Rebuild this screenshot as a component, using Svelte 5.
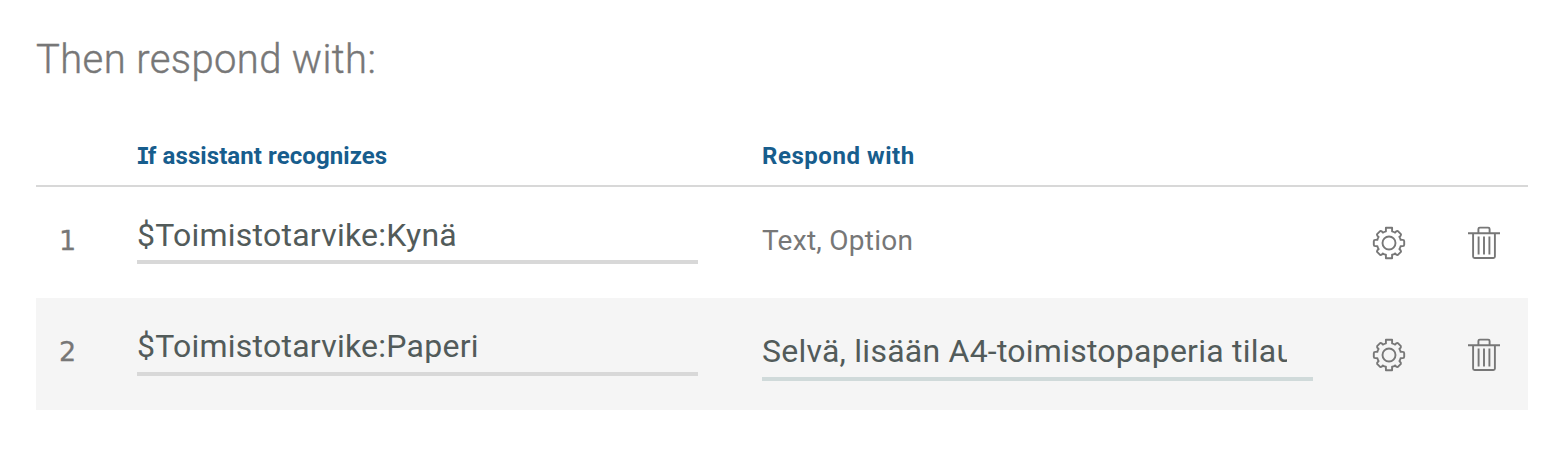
<script>
  const rows = [
    { id: 1, condition: '$Toimistotarvike:Kynä', response: 'Text, Option', editable: false },
    { id: 2, condition: '$Toimistotarvike:Paperi', response: 'Selvä, lisään A4-toimistopaperia tilau', editable: true }
  ];
</script>

{#snippet gear()}
  <svg width="34" height="34" viewBox="-17 -17 34 34" fill="none" stroke="#777" stroke-width="1.9" stroke-linejoin="round">
    <circle r="6.5" />
    <path d="M-3.1 -15.2H3.1V-11.6Q5.1 -11 6.1 -10.4Q7.5 -12.4 8.9 -11.9L11.9 -8.9Q12.4 -7.5 10.4 -6.1Q11.4 -4.8 11.6 -3.1H13.8Q15.2 -3.1 15.2 -1.7V1.7Q15.2 3.1 13.8 3.1H11.6Q11.4 4.8 10.4 6.1Q12.4 7.5 11.9 8.9L8.9 11.9Q7.5 12.4 6.1 10.4Q4.8 11.4 3.1 11.6V15.2H-3.1V11.6Q-4.8 11.4 -6.1 10.4Q-7.5 12.4 -8.9 11.9L-11.9 8.9Q-12.4 7.5 -10.4 6.1Q-11.4 4.8 -11.6 3.1H-13.8Q-15.2 3.1 -15.2 1.7V-1.7Q-15.2 -3.1 -13.8 -3.1H-11.6Q-11.4 -4.8 -10.4 -6.1Q-12.4 -7.5 -11.9 -8.9L-8.9 -11.9Q-7.5 -12.4 -6.1 -10.4Q-5.1 -11 -3.1 -11.6Z" />
  </svg>
{/snippet}

{#snippet trash()}
  <svg width="34" height="34" viewBox="0 0 34 34" fill="none" stroke="#777" stroke-width="1.9" stroke-linejoin="round">
    <path d="M1 7.2H33M11.4 7V3Q11.4 1.6 12.8 1.6H21.2Q22.6 1.6 22.6 3V7M6.1 7.2V30.5Q6.1 32 7.6 32H26.4Q27.9 32 27.9 30.5V7.2M11.6 10.5V28.5M17 10.5V28.5M22.4 10.5V28.5" />
  </svg>
{/snippet}

<main>
  <h1>Then respond with:</h1>
  <div class="grid head">
    <span></span>
    <span class="cond-title"><span class="cap">I</span>f assistant recognizes</span>
    <span class="resp-title">Respond with</span>
  </div>
  {#each rows as row}
    <div class="grid row" class:shaded={row.id % 2 === 0}>
      <span class="num">{row.id}</span>
      <div class="field" class:first={row.id === 1}><span>{row.condition}</span></div>
      {#if row.editable}
        <div class="field reply"><span>{row.response}</span></div>
      {:else}
        <div class="summary">{row.response}</div>
      {/if}
      <div class="icon">{@render gear()}</div>
      <div class="icon">{@render trash()}</div>
    </div>
  {/each}
</main>

<style>
  :global(body) { background: #fff; }
  main {
    box-sizing: border-box;
    height: 462px;
    padding: 36px 24px 0 36px;
    font-family: Roboto, "Liberation Sans", sans-serif;
    color: #777;
    overflow: hidden;
  }
  h1 { margin: 0; font-size: 40px; line-height: 48px; font-weight: 300; letter-spacing: 0.38px; white-space: nowrap; -webkit-text-stroke: 0.4px; }
  .grid { display: grid; grid-template-columns: 101px 625px 574px 95px 1fr; }
  .head {
    box-sizing: border-box;
    height: 103px;
    padding-top: 56px;
    border-bottom: 2px solid #d8d8d8;
    color: #175d8d;
    font-size: 24px;
    line-height: 32px;
    font-weight: 700;
    white-space: nowrap;
  }
  .cap { font-family: "DejaVu Sans Mono", monospace; font-size: 23px; line-height: 1; letter-spacing: -2px; margin-left: -1px; }
  .cond-title { letter-spacing: 0.08px; }
  .resp-title { letter-spacing: 0.55px; }
  .row { height: 111px; align-items: start; }
  .shaded { height: 112px; background: #f5f5f5; }
  .num { padding: 30px 0 0 23px; font-family: "DejaVu Sans", sans-serif; font-size: 27px; line-height: 48px; -webkit-text-stroke: 0.3px; }
  .field {
    box-sizing: border-box;
    width: 561px;
    height: 54px;
    margin-top: 24px;
    border-bottom: 4px solid #d8d8d8;
    color: #525b5a;
    font-size: 32px;
    line-height: 48px;
    letter-spacing: 0.24px;
    white-space: nowrap;
  }
  .first { height: 53px; }
  .field span { display: block; overflow: hidden; }
  .reply { width: 551px; margin-top: 29px; border-color: #d0dada; }
  .reply span { width: 525px; }
  .summary { padding-top: 30px; font-size: 28px; line-height: 48px; letter-spacing: 0.27px; }
  .icon { padding: 39px 0 0 36px; }
  .shaded .icon { padding-top: 39.5px; }
  .icon svg { display: block; }
</style>
